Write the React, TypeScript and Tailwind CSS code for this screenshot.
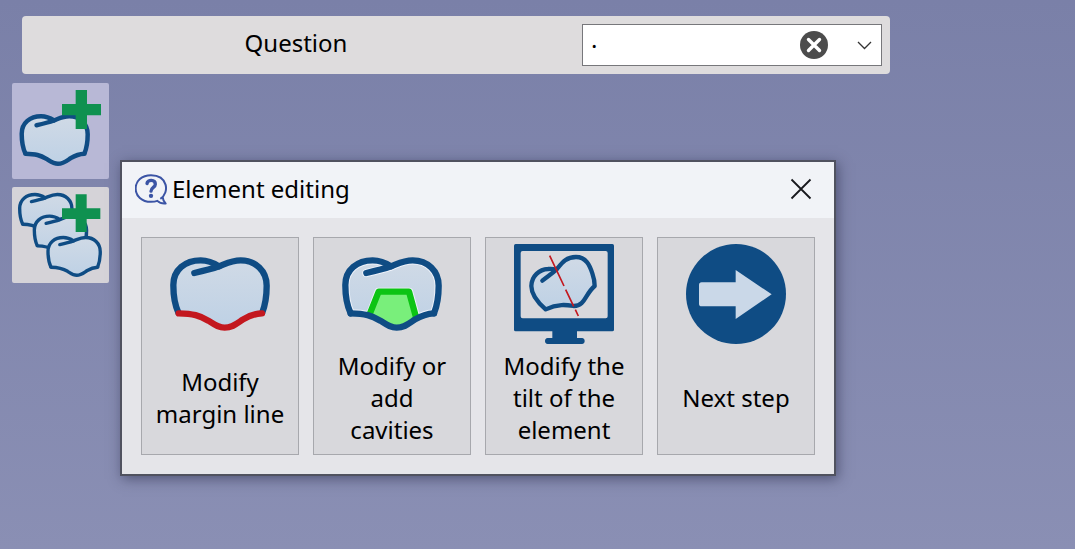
import { useState } from "react";
import type { ReactNode } from "react";

const OUTLINE =
  "M116 235C104 210 100 175 100 150C100 104 136 76 182 76C207 76 222 84 237 94C262 84 275 76 302 76C347 76 380 108 380 152C380 185 376 210 366 235";
const GROOVE = "M163 114C195 107 215 102 237 94";
const MARGIN =
  "M366 235C340 236 326 243 308 254C290 266 277 278 254 278C234 278 224 269 205 257C178 241 160 236 116 235";
const BODY = OUTLINE + MARGIN.replace("M366 235", "");

function Gradients() {
  return (
    <svg className="absolute h-0 w-0" aria-hidden="true">
      <defs>
        <linearGradient id="enamel" x1="0" y1="0" x2="0" y2="1">
          <stop offset="0" stopColor="#d0dae6" />
          <stop offset="1" stopColor="#bed1e5" />
        </linearGradient>
        <clipPath id="tooth-body">
          <path d={BODY} />
        </clipPath>
      </defs>
    </svg>
  );
}

function Tooth({ transform, margin = "#0f4c84", width = 19 }: { transform?: string; margin?: string; width?: number }) {
  return (
    <g transform={transform} fill="none" strokeWidth={width} strokeLinejoin="round">
      <path d={BODY} fill="url(#enamel)" />
      <path d={OUTLINE} stroke="#0f4c84" />
      <path d={GROOVE} stroke="#0f4c84" strokeLinecap="round" />
      <path d={MARGIN} stroke={margin} strokeLinecap="round" />
    </g>
  );
}

function AddToothIcon() {
  return (
    <svg viewBox="36 24 291 288" className="h-full w-full" aria-hidden="true">
      <Tooth transform="translate(-5.6 70) scale(.707)" />
      <path d="M227 45h34v42h42v34h-42v41h-34v-41h-41V87h41z" fill="#0f9150" />
    </svg>
  );
}

function AddTeethIcon() {
  return (
    <svg viewBox="36 336 291 288" className="h-full w-full" aria-hidden="true">
      <Tooth transform="translate(3 316) scale(.56)" width={18} />
      <Tooth transform="translate(47 381) scale(.56)" width={18} />
      <path d="M227 358h33v42h41v32h-41v39h-33v-39h-41v-32h41z" fill="#0f9150" />
      <Tooth transform="translate(88 445) scale(.56)" width={18} />
    </svg>
  );
}

function MarginIcon() {
  return (
    <svg viewBox="90 27 300 300" className="h-[100px] w-[100px]" aria-hidden="true">
      <Tooth margin="#c3181f" />
    </svg>
  );
}

function CavityIcon() {
  return (
    <svg viewBox="90 27 300 300" className="h-[100px] w-[100px]" aria-hidden="true">
      <g clipPath="url(#tooth-body)">
        <path d={BODY} fill="url(#enamel)" stroke="#eef2fa" strokeWidth="25" />
        <path d={GROOVE} fill="none" stroke="#eef2fa" strokeWidth="25" strokeLinecap="round" />
        <path
          d="M171 244L199 170H292L313 246C290 262 277 278 254 278C224 272 206 252 171 244Z"
          fill="#79ef7b"
          stroke="#eef2fa"
          strokeWidth="23"
          strokeLinejoin="round"
        />
        <path d="M171 244L201 170H291L313 250C290 262 277 278 254 278C224 272 206 252 171 244Z" fill="#79ef7b" />
        <path d="M168 250L200 170H291L313 250" fill="none" stroke="#0cc414" strokeWidth="19" strokeLinejoin="round" />
      </g>
      <g fill="none" stroke="#0f4c84" strokeWidth="19" strokeLinejoin="round" strokeLinecap="round">
        <path d={OUTLINE} />
        <path d={GROOVE} />
        <path d={MARGIN} />
      </g>
    </svg>
  );
}

function TiltIcon() {
  return (
    <svg viewBox="102 27 300 300" className="h-[100px] w-[100px]" aria-hidden="true">
      <path
        fill="#0f4c84"
        fillRule="evenodd"
        d="M107 27H397Q402 27 402 32V284Q402 289 397 289H291V309H306Q314 310 314 318T306 327H203Q195 326 195 318T203 309H217V289H107Q102 289 102 284V32Q102 27 107 27ZM128 48Q122 48 122 54V244Q122 250 128 250H377Q383 250 383 244V54Q383 48 377 48Z"
      />
      <g stroke="#0f4c84" strokeWidth="13" strokeLinejoin="round" strokeLinecap="round">
        <path
          fill="url(#enamel)"
          d="M197 223C168 198 154 178 154 153C155 123 178 103 204 102C214 101 222 102 229 104C247 82 258 66 288 66C318 66 329 91 337 115C343 132 344 142 344 153C315 178 315 212 282 213C262 210 235 205 197 223Z"
        />
        <path fill="none" d="M187 137C203 124 216 116 229 104" />
      </g>
      <path d="M209 62L252 153M257 164L281 214M286 224L295 243" stroke="#c3181f" strokeWidth="5" fill="none" />
    </svg>
  );
}

function NextIcon() {
  return (
    <svg viewBox="108 267 300 300" className="h-[100px] w-[100px]" aria-hidden="true">
      <circle cx="258" cy="417" r="150" fill="#0f4c84" />
      <path d="M257 345L365 418L257 492V454H155Q147 454 147 446V390Q147 382 155 382H257Z" fill="#cad8e8" />
    </svg>
  );
}

function HelpIcon() {
  return (
    <svg viewBox="60 56 96 92" className="h-[31px] w-8" fill="none" stroke="#3b54a5" aria-hidden="true">
      <path
        d="M136 130C165 111 158 59 108 59C80 59 62 77 62 99S80 139 108 139C116 139 122 138 127 136C134 143 142 145 152 144C147 140 144 134 143 125"
        strokeWidth="6"
        strokeLinejoin="round"
      />
      <path d="M96 84C97 72 121 71 121 86C121 96 108 95 108 107" strokeWidth="10" strokeLinecap="round" />
      <circle cx="108" cy="121" r="6.5" fill="#3b54a5" stroke="none" />
    </svg>
  );
}

function ActionButton({ icon, children }: { icon: ReactNode; children: ReactNode }) {
  return (
    <button
      type="button"
      className="flex h-[218px] min-w-0 flex-col items-center border border-[#a7a8ad] bg-[#d8d8dc] px-[13px] pt-1.5 pb-0.5 text-center"
    >
      {icon}
      <span className="flex flex-1 items-center leading-8">{children}</span>
    </button>
  );
}

export default function App() {
  const [answer, setAnswer] = useState("·");
  const [open, setOpen] = useState(true);

  return (
    <main className="relative min-h-screen bg-linear-to-b from-[#7a80a8] to-[#8a8fb4] pt-4 pb-10 font-['Noto_Sans','Open_Sans',sans-serif] text-[24px] text-black">
      <Gradients />
      <div className="mr-[185px] ml-[22px] flex h-[58px] items-center rounded bg-[#dedcdd] pr-2">
        <label htmlFor="answer" className="flex-1 pr-3 pb-1 text-center">
          Question
        </label>
        <div className="flex h-[42px] w-[300px] items-center border border-[#77777b] bg-white">
          <input
            id="answer"
            value={answer}
            onChange={(e) => setAnswer(e.target.value)}
            className="h-full min-w-0 flex-1 bg-transparent px-2 outline-none"
          />
          <button type="button" aria-label="Clear" onClick={() => setAnswer("")} className="mr-7">
            <svg viewBox="0 0 28 28" className="h-7 w-7" aria-hidden="true">
              <circle cx="14" cy="14" r="14" fill="#4c4c4c" />
              <path d="M8.5 8.5l11 11M19.5 8.5l-11 11" stroke="white" strokeWidth="3.4" strokeLinecap="round" />
            </svg>
          </button>
          <button type="button" aria-label="Show options" className="mr-[9px]">
            <svg viewBox="0 0 16 16" className="h-4 w-4" fill="none" stroke="#333" strokeWidth="1.3" aria-hidden="true">
              <path d="M2 5l6.5 6.5L15 5" />
            </svg>
          </button>
        </div>
      </div>

      <nav className="mt-[9px] ml-3 flex w-[97px] flex-col gap-2" aria-label="Elements">
        <button type="button" aria-label="Add element" className="h-24 rounded-xs bg-[#b8b8d6]">
          <AddToothIcon />
        </button>
        <button type="button" aria-label="Add several elements" className="h-24 rounded-xs bg-[#d5d3d8]">
          <AddTeethIcon />
        </button>
      </nav>

      {open && (
        <section
          role="dialog"
          aria-labelledby="dialog-title"
          className="absolute top-[160px] left-[120px] w-[716px] border-2 border-[#50525f] bg-[#e5e5e9] shadow-[2px_3px_12px_rgba(30,32,60,0.5)]"
        >
          <header className="flex h-14 items-center bg-[#f1f3f7] pr-[22px] pb-0.5 pl-[13px]">
            <HelpIcon />
            <h1 id="dialog-title" className="flex-1 pl-[5px] leading-8">
              Element editing
            </h1>
            <button type="button" aria-label="Close" onClick={() => setOpen(false)}>
              <svg viewBox="0 0 22 22" className="h-[22px] w-[22px]" stroke="#17181c" strokeWidth="1.8" aria-hidden="true">
                <path d="M1.5 1.5l19 19M20.5 1.5l-19 19" />
              </svg>
            </button>
          </header>
          <div className="grid grid-cols-4 gap-3.5 p-[19px]">
            <ActionButton icon={<MarginIcon />}>Modify margin line</ActionButton>
            <ActionButton icon={<CavityIcon />}>Modify or add cavities</ActionButton>
            <ActionButton icon={<TiltIcon />}>Modify the tilt of the element</ActionButton>
            <ActionButton icon={<NextIcon />}>Next step</ActionButton>
          </div>
        </section>
      )}
    </main>
  );
}
